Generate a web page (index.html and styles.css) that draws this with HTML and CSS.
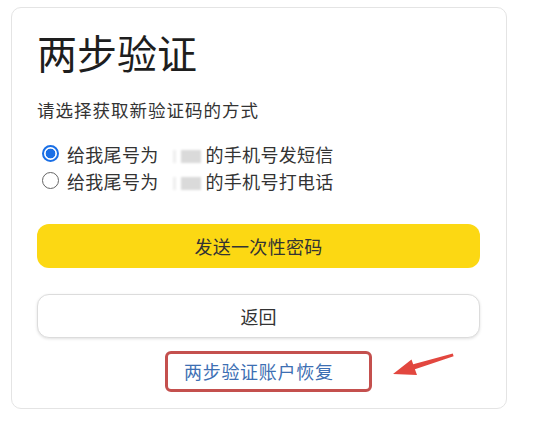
FILE: index.html
```html
<!DOCTYPE html>
<html lang="zh-CN">
<head>
<meta charset="utf-8">
<title>两步验证</title>
<link rel="stylesheet" href="styles.css">
</head>
<body>
<div class="page">
  <div class="card">
    <h1 class="title">两步验证</h1>
    <p class="subtitle">请选择获取新验证码的方式</p>
    <div class="options">
      <label class="option">
        <span class="radio checked"></span>
        <span class="opt-text">给我尾号为<span class="masked"></span>的手机号发短信</span>
      </label>
      <label class="option">
        <span class="radio"></span>
        <span class="opt-text">给我尾号为<span class="masked"></span>的手机号打电话</span>
      </label>
    </div>
    <button class="btn btn-primary">发送一次性密码</button>
    <button class="btn btn-secondary">返回</button>
    <div class="link-row">
      <a class="recover-link">两步验证账户恢复</a>
    </div>
  </div>
  <svg class="arrow" width="80" height="40" viewBox="385 345 80 40">
    <polygon fill="#e2473f" points="393,374 411.5,359.5 413.2,364.2 452.8,353.6 453.6,356.2 414.9,369.2 417,375"/>
  </svg>
</div>
</body>
</html>
```

FILE: styles.css
```css
* { box-sizing: border-box; }
html, body { margin: 0; padding: 0; background: #ffffff; }
body {
  font-family: "Noto Sans CJK SC", "Noto Sans", "Liberation Sans", sans-serif;
  color: #333;
  width: 558px;
  height: 426px;
  overflow: hidden;
}
.page {
  position: relative;
  padding: 7px 0 0 11px;
}
.card {
  width: 496px;
  border: 1px solid #e4e4e4;
  border-radius: 10px;
  padding: 20px 26px 16px 25px;
  background: #fff;
}
.title {
  margin: 0;
  font-size: 40px;
  font-weight: 400;
  line-height: 48px;
  color: #1e1e1e;
}
.subtitle {
  margin: 22px 0 0;
  font-size: 17.5px;
  letter-spacing: 1px;
  line-height: 24px;
  color: #333;
}
.options {
  margin-top: 18px;
  display: flex;
  flex-direction: column;
}
.option {
  display: flex;
  align-items: center;
  height: 27px;
  font-size: 18px;
  color: #333;
}
.radio {
  width: 17px;
  height: 17px;
  border-radius: 50%;
  border: 1.5px solid #666;
  margin: 0 8px 0 5px;
  flex: none;
  background: #fff;
}
.radio.checked {
  border: 2px solid #1a6fe6;
  background: radial-gradient(circle, #1a6fe6 0 4.5px, #fff 5.2px);
}
.opt-text { white-space: nowrap; letter-spacing: 0.3px; }
.masked {
  display: inline-block;
  width: 28px;
  height: 13px;
  vertical-align: -1px;
  margin: 0 5px 0 14px;
  background: linear-gradient(90deg, #eee 0 3px, #fff 3px 8px, #dadada 8px 28px);
  filter: blur(0.8px);
}
.btn {
  display: block;
  width: 443px;
  height: 44px;
  border-radius: 12px;
  font-family: inherit;
  font-size: 18px;
  color: #333;
  cursor: pointer;
}
.btn-primary {
  margin-top: 30px;
  border: none;
  background: #fcd813;
  letter-spacing: 0.3px;
}
.btn-secondary {
  margin-top: 26px;
  background: #fff;
  border: 1px solid #dcdcdc;
  box-shadow: 0 1px 3px rgba(0,0,0,0.12);
}
.link-row {
  margin-top: 13px;
  display: flex;
  justify-content: flex-start;
  padding-left: 128px;
}
.recover-link {
  display: inline-block;
  border: 3px solid #c4504e;
  border-radius: 6px;
  padding: 5px 35px 5px 16px;
  font-size: 18px;
  letter-spacing: 0.7px;
  line-height: 25px;
  color: #3d6fb3;
  text-decoration: none;
}
.arrow {
  position: absolute;
  left: 385px;
  top: 345px;
}
```
